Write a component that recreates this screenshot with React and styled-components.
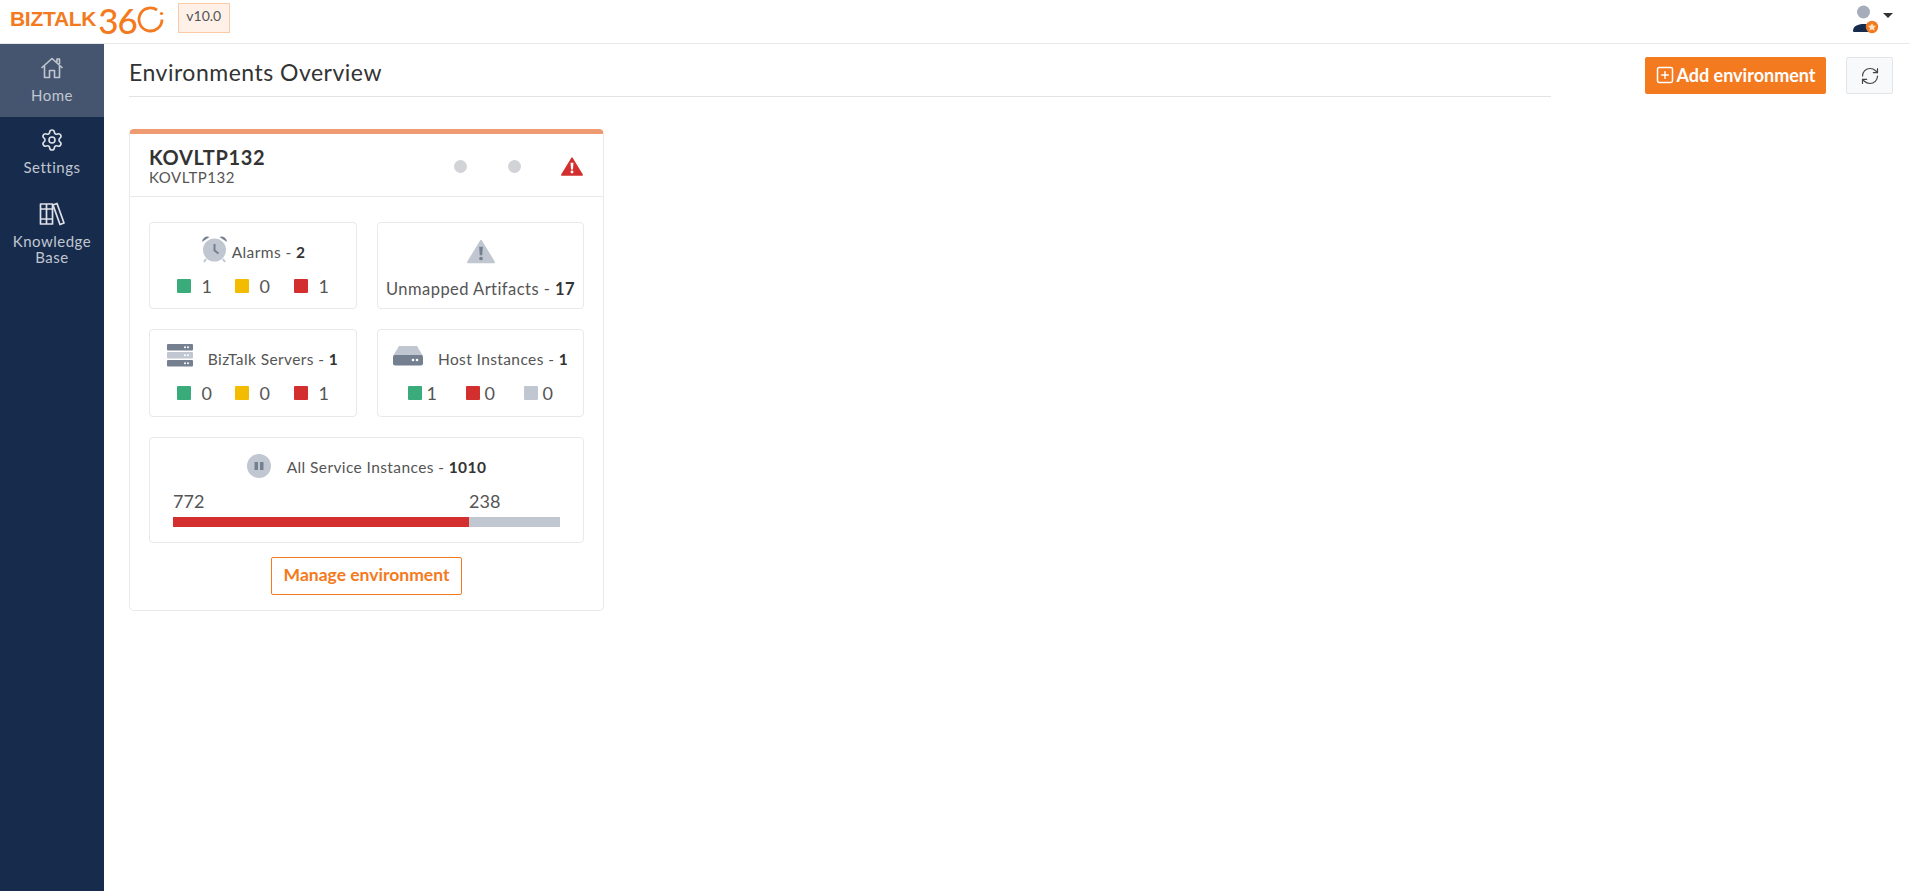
import React from "react";
import styled, { createGlobalStyle } from "styled-components";
import { Settings, RefreshCw, SquarePlus } from "lucide-react";

const GREEN = "#3aab7b";
const YELLOW = "#f4bc00";
const RED = "#d32f2f";
const GREY = "#c1c7d0";
const SLATE = "#74808f";
const ORANGE = "#f47a20";

const GlobalStyle = createGlobalStyle`
  html, body { margin: 0; padding: 0; background: #fff; }
  body { font-family: "Lato", "Open Sans", sans-serif; color: #3a3a3a; }
  * { box-sizing: border-box; }
`;

const TopBar = styled.header`
  height: 44px;
  display: flex;
  align-items: flex-start;
  justify-content: space-between;
  border-bottom: 1px solid #e8e9ec;
  padding: 3px 17px 0 10px;
`;

const Brand = styled.div`
  display: flex;
  align-items: flex-start;
`;

const LogoWord = styled.span`
  font-family: "Liberation Sans", sans-serif;
  font-weight: 700;
  font-size: 21px;
  line-height: 27px;
  margin-top: 2px;
  color: ${ORANGE};
  letter-spacing: -0.3px;
`;

const LogoNumber = styled.span`
  font-family: "Lato", sans-serif;
  font-weight: 500;
  font-size: 35px;
  line-height: 38px;
  margin: -2px 0 0 2px;
  color: ${ORANGE};
  letter-spacing: -1px;
`;

const Ring = styled.svg`
  width: 27px;
  height: 27px;
  margin-top: 3px;
`;

const Version = styled.span`
  margin-left: 14px;
  height: 30px;
  width: 52px;
  background: #fff1e7;
  border: 1px solid #fac9a5;
  font-size: 14px;
  line-height: 24px;
  text-align: center;
  color: #555;
`;

const UserMenu = styled.div`
  display: flex;
  align-items: flex-start;
  gap: 4px;
  padding-top: 1px;
`;

const Caret = styled.span`
  margin-top: 9px;
  border-left: 5px solid transparent;
  border-right: 5px solid transparent;
  border-top: 5px solid #333;
`;

const Shell = styled.div`
  display: flex;
  min-height: 847px;
`;

const Sidebar = styled.nav`
  width: 104px;
  flex: none;
  background: #172b4d;
`;

const NavItem = styled.a`
  display: flex;
  flex-direction: column;
  align-items: center;
  padding: ${(p) => (p.$active ? "12px 2px 14px" : "11px 2px 16px")};
  background: ${(p) => (p.$active ? "#45556f" : "transparent")};
  color: #c1c7d0;
  font-size: 15px;
  line-height: 16px;
  text-align: center;
  letter-spacing: 0.5px;
`;

const NavLabel = styled.span`
  margin-top: 7px;
`;

const Main = styled.main`
  flex: 1;
  padding: 13px 17px 0 25px;
`;

const HeadRow = styled.div`
  display: flex;
  align-items: flex-start;
  gap: 20px;
`;

const TitleBar = styled.div`
  width: 1422px;
  height: 40px;
  border-bottom: 1px solid #e2e3e6;
`;

const Title = styled.h1`
  margin: 0;
  font-size: 23px;
  font-weight: 400;
  line-height: 30px;
  letter-spacing: 0.5px;
  color: #333;
`;

const Actions = styled.div`
  margin-left: 74px;
  display: flex;
  gap: 20px;
`;

const AddButton = styled.button`
  height: 37px;
  width: 181px;
  display: flex;
  align-items: center;
  justify-content: center;
  gap: 1px;
  padding: 0 0 2px;
  border: 0;
  border-radius: 2px;
  background: ${ORANGE};
  color: #fff;
  font: 700 18px "Lato", sans-serif;
`;

const RefreshButton = styled.button`
  height: 37px;
  width: 47px;
  display: flex;
  align-items: center;
  justify-content: center;
  border: 1px solid #e3e5e8;
  border-radius: 2px;
  background: #f8f9fa;
  color: #444;
`;

const Card = styled.section`
  margin-top: 32px;
  width: 475px;
  border: 1px solid #e8e9ec;
  border-top: 5px solid #ee9b71;
  border-radius: 5px;
  padding-bottom: 15px;
`;

const CardHead = styled.div`
  height: 63px;
  display: flex;
  justify-content: space-between;
  align-items: center;
  padding: 0 20px 0 19px;
  border-bottom: 1px solid #e8e9ec;
`;

const CardName = styled.div`
  font-size: 20px;
  font-weight: 700;
  line-height: 24px;
  letter-spacing: 0.65px;
  color: #333;
`;

const CardSub = styled.div`
  font-size: 15px;
  line-height: 17px;
  letter-spacing: 0.5px;
  color: #555;
`;

const StatusIcons = styled.div`
  display: flex;
  align-items: center;
  margin-top: 3px;
`;

const StatusDot = styled.span`
  width: 13px;
  height: 13px;
  border-radius: 50%;
  background: #d1d3d6;
  margin-right: ${(p) => p.$gap}px;
`;

const TileGrid = styled.div`
  display: grid;
  grid-template-columns: 208px 207px;
  gap: 20px;
  padding: 25px 19px 0;
`;

const Tile = styled.div`
  grid-column: ${(p) => (p.$wide ? "1 / -1" : "auto")};
  height: ${(p) => p.$h}px;
  border: 1px solid #e8e9ec;
  border-radius: 4px;
  padding: ${(p) => (p.$wide ? "12px 23px 0" : `${p.$pad || 10}px 6px 0`)};
  display: flex;
  flex-direction: column;
  align-items: ${(p) => (p.$wide ? "stretch" : "center")};
`;

const TileHead = styled.div`
  height: 32px;
  display: flex;
  align-items: center;
  justify-content: center;
  gap: ${(p) => p.$gap}px;
  font-size: 15.5px;
  letter-spacing: 0.4px;
  color: #555;
  white-space: nowrap;
  margin-left: ${(p) => p.$shift || 0}px;
`;

const TileLabel = styled.span`
  margin-top: ${(p) => p.$top || 0}px;
`;

const Strong = styled.b`
  color: #333;
`;

const Counts = styled.div`
  margin-top: 9px;
  display: flex;
  align-items: center;
  justify-content: center;
`;

const Count = styled.span`
  display: flex;
  align-items: center;
  gap: ${(p) => p.$gap}px;
  font-size: 18px;
  line-height: 24px;
  color: #555;
  width: ${(p) => p.$width}px;
`;

const Swatch = styled.i`
  width: 14px;
  height: 14px;
  border-radius: 1px;
  background: ${(p) => p.$color};
`;

const ArtifactsLabel = styled.div`
  margin-top: 10px;
  font-size: 16.5px;
  line-height: 24px;
  letter-spacing: 0.45px;
  color: #555;
  white-space: nowrap;
`;

const BarLabels = styled.div`
  margin-top: 7px;
  display: flex;
  font-size: 18px;
  line-height: 24px;
  color: #555;
`;

const BarValue = styled.span`
  width: ${(p) => p.$width}%;
`;

const Bar = styled.div`
  margin-top: 4px;
  height: 10px;
  display: flex;
  background: ${GREY};
`;

const BarFill = styled.div`
  background: ${RED};
`;

const CardFoot = styled.div`
  margin-top: 14px;
  display: flex;
  justify-content: center;
`;

const ManageButton = styled.button`
  height: 38px;
  width: 191px;
  padding: 0 0 3px;
  background: #fff;
  border: 1px solid ${ORANGE};
  border-radius: 2px;
  color: ${ORANGE};
  font: 700 17.5px "Lato", sans-serif;
`;

const HomeIcon = () => (
  <svg width="24" height="24" viewBox="0 0 24 24" fill="none" stroke="#c1c7d0" strokeWidth="1.6" strokeLinejoin="round">
    <path d="M1.5 12 12 2.5 22.5 12M4.5 10v11.5h5v-7h5v7h5V10M17 6V3h2.5v5" />
  </svg>
);

const BooksIcon = () => (
  <svg width="26" height="24" viewBox="0 0 26 24" fill="none" stroke="#dfe1e6" strokeWidth="1.7" strokeLinejoin="round">
    <path d="M1.5 2h6v20h-6zM7.5 2h6v20h-6zM1.5 7h12M1.5 17h12M14 3l4-1.5 7 19.5-4 1.5z" />
  </svg>
);

const ClockIcon = () => (
  <svg width="27" height="28" viewBox="0 0 27 28">
    <circle cx="13.5" cy="15" r="11.5" fill={GREY} />
    <path d="M1 7a5.5 5.5 0 0 1 7.5-5zM26 7a5.5 5.5 0 0 0-7.5-5z" fill={SLATE} />
    <path d="M13.5 9v6.5l4 3" fill="none" stroke={SLATE} strokeWidth="2" />
    <path d="M5 24l-2 3M22 24l2 3" stroke={GREY} strokeWidth="2" />
  </svg>
);

const TriangleIcon = ({ fill, mark, width, height }) => (
  <svg width={width} height={height} viewBox="0 0 30 26">
    <path d="M15 1.5 29 24.5H1z" fill={fill} stroke={fill} strokeWidth="2" strokeLinejoin="round" />
    <path d="M13 8h4l-.7 9h-2.6z" fill={mark} />
    <circle cx="15" cy="20.5" r="2" fill={mark} />
  </svg>
);

const ServersIcon = () => (
  <svg width="26" height="24" viewBox="0 0 26 24">
    <rect y="0" width="26" height="6.5" rx="1" fill={SLATE} />
    <rect y="8" width="26" height="6.5" rx="1" fill={GREY} />
    <rect y="16" width="26" height="6.5" rx="1" fill={SLATE} />
    <g fill="#fff">
      <circle cx="18" cy="3.2" r="1" /><circle cx="21" cy="3.2" r="1" />
      <circle cx="18" cy="11.2" r="1" /><circle cx="21" cy="11.2" r="1" />
      <circle cx="18" cy="19.2" r="1" /><circle cx="21" cy="19.2" r="1" />
    </g>
  </svg>
);

const HostIcon = () => (
  <svg width="30" height="20" viewBox="0 0 30 20">
    <path d="M6 0h18l6 10H0z" fill={GREY} />
    <rect y="9" width="30" height="10.5" rx="2" fill={SLATE} />
    <circle cx="20" cy="14" r="1.3" fill="#fff" />
    <circle cx="24" cy="14" r="1.3" fill="#fff" />
  </svg>
);

const PauseIcon = () => (
  <svg width="24" height="24" viewBox="0 0 24 24">
    <circle cx="12" cy="12" r="12" fill={GREY} />
    <rect x="7.5" y="8" width="3.5" height="8" fill={SLATE} />
    <rect x="13" y="8" width="3.5" height="8" fill={SLATE} />
  </svg>
);

const UserIcon = () => (
  <svg width="28" height="30" viewBox="0 0 28 30">
    <circle cx="12.5" cy="8" r="6.5" fill="#a5adba" />
    <path d="M2 27c0-5 5-7 10.5-7S23 22 23 27c0 1-1 1-2 1H4c-1 0-2 0-2-1z" fill="#172b4d" />
    <circle cx="21" cy="23" r="6.2" fill={ORANGE} />
    <path d="m21 19 1.2 2.6 2.8.3-2 1.9.5 2.8-2.5-1.4-2.5 1.4.5-2.8-2-1.9 2.8-.3z" fill="#fde3c4" />
  </svg>
);

const tiles = [
  { icon: <ServersIcon />, label: "BizTalk Servers", total: 1, gap: 15, shift: -1, top: 5 },
  { icon: <HostIcon />, label: "Host Instances", total: 1, gap: 15, shift: 0, top: 5 },
];

export default function App() {
  return (
    <>
      <GlobalStyle />
      <TopBar>
        <Brand>
          <LogoWord>BIZTALK</LogoWord>
          <LogoNumber>36</LogoNumber>
          <Ring viewBox="0 0 27 27">
            <path d="M20 4a11.5 11.5 0 1 0 5 9.5" fill="none" stroke={ORANGE} strokeWidth="2.8" />
            <circle cx="24.5" cy="7.5" r="1.6" fill={ORANGE} />
          </Ring>
          <Version>v10.0</Version>
        </Brand>
        <UserMenu>
          <UserIcon />
          <Caret />
        </UserMenu>
      </TopBar>
      <Shell>
        <Sidebar>
          <NavItem $active>
            <HomeIcon />
            <NavLabel>Home</NavLabel>
          </NavItem>
          <NavItem>
            <Settings size={24} color="#dfe1e6" strokeWidth={1.6} />
            <NavLabel>Settings</NavLabel>
          </NavItem>
          <NavItem>
            <BooksIcon />
            <NavLabel>Knowledge Base</NavLabel>
          </NavItem>
        </Sidebar>
        <Main>
          <HeadRow>
            <TitleBar>
              <Title>Environments Overview</Title>
            </TitleBar>
            <Actions>
              <AddButton>
                <SquarePlus size={20} strokeWidth={1.8} />
                Add environment
              </AddButton>
              <RefreshButton>
                <RefreshCw size={20} strokeWidth={1.4} />
              </RefreshButton>
            </Actions>
          </HeadRow>
          <Card>
            <CardHead>
              <div>
                <CardName>KOVLTP132</CardName>
                <CardSub>KOVLTP132</CardSub>
              </div>
              <StatusIcons>
                <StatusDot $gap={41} />
                <StatusDot $gap={40} />
                <TriangleIcon fill={RED} mark="#fff" width={22} height={19} />
              </StatusIcons>
            </CardHead>
            <TileGrid>
              <Tile $h={87}>
                <TileHead $gap={4}>
                  <ClockIcon />
                  <TileLabel $top={6}>
                    Alarms - <Strong>2</Strong>
                  </TileLabel>
                </TileHead>
                <Counts>
                  <Count $gap={11} $width={58}><Swatch $color={GREEN} />1</Count>
                  <Count $gap={11} $width={59}><Swatch $color={YELLOW} />0</Count>
                  <Count $gap={11} $width={36}><Swatch $color={RED} />1</Count>
                </Counts>
              </Tile>
              <Tile $h={87} $pad={12}>
                <TileHead $gap={0}>
                  <TriangleIcon fill={GREY} mark={SLATE} width={28} height={25} />
                </TileHead>
                <ArtifactsLabel>
                  Unmapped Artifacts - <Strong>17</Strong>
                </ArtifactsLabel>
              </Tile>
              {tiles.map((t) => (
                <Tile $h={88} key={t.label}>
                  <TileHead $gap={t.gap} $shift={t.shift}>
                    {t.icon}
                    <TileLabel $top={t.top}>
                      {t.label} - <Strong>{t.total}</Strong>
                    </TileLabel>
                  </TileHead>
                  {t.label === "BizTalk Servers" ? (
                    <Counts>
                      <Count $gap={11} $width={58}><Swatch $color={GREEN} />0</Count>
                      <Count $gap={11} $width={59}><Swatch $color={YELLOW} />0</Count>
                      <Count $gap={11} $width={36}><Swatch $color={RED} />1</Count>
                    </Counts>
                  ) : (
                    <Counts>
                      <Count $gap={5} $width={58}><Swatch $color={GREEN} />1</Count>
                      <Count $gap={5} $width={58}><Swatch $color={RED} />0</Count>
                      <Count $gap={5} $width={30}><Swatch $color={GREY} />0</Count>
                    </Counts>
                  )}
                </Tile>
              ))}
              <Tile $wide $h={106}>
                <TileHead $gap={16}>
                  <PauseIcon />
                  <TileLabel $top={1}>
                    All Service Instances - <Strong>1010</Strong>
                  </TileLabel>
                </TileHead>
                <BarLabels>
                  <BarValue $width={76.5}>772</BarValue>
                  <BarValue $width={23.5}>238</BarValue>
                </BarLabels>
                <Bar>
                  <BarFill style={{ width: `${(772 / 1010) * 100}%` }} />
                </Bar>
              </Tile>
            </TileGrid>
            <CardFoot>
              <ManageButton>Manage environment</ManageButton>
            </CardFoot>
          </Card>
        </Main>
      </Shell>
    </>
  );
}
